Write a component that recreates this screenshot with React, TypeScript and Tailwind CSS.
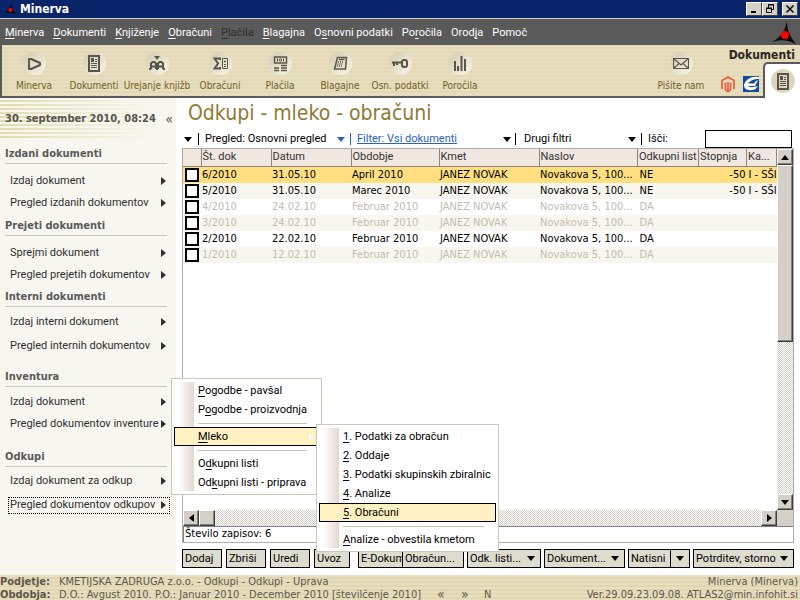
import * as React from 'react';
import clsx from 'clsx';

interface MenuEntry { label: string; disabled?: boolean }
interface Tool { label: string; width: string; icon: React.ReactNode }
interface Section { title: string; className: string; listClass: string; items: string[] }
interface Row { doc: string; date: string; period: string; list: string; rate?: string; group?: string; tone: string }

const MENU: MenuEntry[] = [
  { label: '&Minerva' }, { label: '&Dokumenti' }, { label: '&Knjiženje' }, { label: '&Obračuni' },
  { label: '&Plačila', disabled: true }, { label: '&Blagajna' }, { label: 'O&snovni podatki' },
  { label: 'Po&ročila' }, { label: 'Orod&ja' }, { label: 'Pomoč' },
];

const INK = '#5a554c';

const DocGlyph = () => (
  <svg width="12" height="17" viewBox="0 0 12 17" fill="none" stroke={INK}>
    <rect x="1" y="1" width="10" height="15" strokeWidth="2" />
    <path d="M3 4.500h3M3 6.500h3M7 4.500h2M7 6.500h2M3 8.500h6M3 10.500h6M3 12.500h6" />
    <path d="M3 3h3v4H3z" fill={INK} stroke="none" />
  </svg>
);

const TOOLS: Tool[] = [
  {
    label: 'Minerva', width: 'w-[60px]',
    icon: <svg width="16" height="14" viewBox="0 0 16 14" fill="none" stroke={INK} strokeWidth="2"><path d="M3 2v10h2l9-4V6L5 2z" strokeLinejoin="round" /></svg>,
  },
  { label: 'Dokumenti', width: 'w-[60px]', icon: <DocGlyph /> },
  {
    label: 'Urejanje knjižb', width: 'w-[66px]',
    icon: (
      <svg width="16" height="15" viewBox="0 0 16 15" fill="none" stroke={INK} strokeWidth="2">
        <path d="M5 0h6L8 4z" fill={INK} stroke="none" />
        <path d="M2 13V7.500L3.500 6h2L7 7.500V13M9 13V7.500L10.500 6h2L14 7.500V13M0 13h2M7 13h2M14 13h2M2 10.500h5M9 10.500h5" />
      </svg>
    ),
  },
  {
    label: 'Obračuni', width: 'w-[60px]',
    icon: (
      <svg width="15" height="13" viewBox="0 0 15 13" fill="none" stroke={INK}>
        <path d="M7 3V1.500H1.500L5 6.500 1.500 11.500H7V10" strokeWidth="2" />
        <path d="M9.500 1.500h5v10h-5zM11 4.500h2M12 3.500v2M11 7.500h2M11 9.500h2" />
      </svg>
    ),
  },
  {
    label: 'Plačila', width: 'w-[60px]',
    icon: (
      <svg width="15" height="16" viewBox="0 0 15 16" fill="none" stroke={INK}>
        <path d="M1.500 1h12v6h-12z" strokeWidth="1.500" />
        <path d="M4.500 2.500v3M10.500 2.500v3" /><circle cx="7.500" cy="4" r="1.200" />
        <path d="M1 12h5M1 14.500h5M8 9.500h6M8 12h6M8 14.500h6" strokeWidth="1.700" />
      </svg>
    ),
  },
  {
    label: 'Blagajne', width: 'w-[60px]',
    icon: (
      <svg width="15" height="15" viewBox="0 0 15 15" fill="none" stroke={INK}>
        <path d="M4.500 1.500h9l-1 11.500H1.500z" strokeWidth="1.500" />
        <path d="M6 3.500h5.500M5 6h1M7 6h1M9 6h1M4.500 8h1M6.500 8h1M8.500 8h1M4 10h1M6 10h1M8 10h1" strokeWidth="1.300" />
      </svg>
    ),
  },
  {
    label: 'Osn. podatki', width: 'w-[60px]',
    icon: (
      <svg width="16" height="9" viewBox="0 0 16 9" fill="none" stroke={INK} strokeWidth="2">
        <rect x="10" y="1" width="5" height="7" rx="2" /><path d="M0 3.500h10M2 4v3M5 4v2" />
      </svg>
    ),
  },
  {
    label: 'Poročila', width: 'w-[60px]',
    icon: <svg width="12" height="15" viewBox="0 0 12 15" stroke={INK} strokeWidth="2"><path d="M1 5v10M4 10v5M7.500 0v15M11 3v12" /></svg>,
  },
];

const SECTIONS: Section[] = [
  { title: 'Izdani dokumenti', className: 'pt-[6px]', listClass: 'pt-[6px]', items: ['Izdaj dokument', 'Pregled izdanih dokumentov'] },
  { title: 'Prejeti dokumenti', className: 'pt-1', listClass: 'pt-[6px]', items: ['Sprejmi dokument', 'Pregled prejetih dokumentov'] },
  { title: 'Interni dokumenti', className: 'pt-[3px]', listClass: 'pt-1 gap-[2px]', items: ['Izdaj interni dokument', 'Pregled internih dokumentov'] },
  { title: 'Inventura', className: 'pt-3', listClass: 'pt-1', items: ['Izdaj dokument', 'Pregled dokumentov inventure'] },
  { title: 'Odkupi', className: 'pt-[14px]', listClass: 'pt-[3px] gap-[2px]', items: ['Izdaj dokument za odkup', 'Pregled dokumentov odkupov'] },
];

const ROWS: Row[] = [
  { doc: '6/2010', date: '31.05.10', period: 'April 2010', list: 'NE', rate: '-50', group: 'I - SŠI', tone: 'bg-[#ffdf80] text-black' },
  { doc: '5/2010', date: '31.05.10', period: 'Marec 2010', list: 'NE', rate: '-50', group: 'I - SŠI', tone: 'bg-[#f7f7ef] text-black' },
  { doc: '4/2010', date: '24.02.10', period: 'Februar 2010', list: 'DA', tone: 'bg-white text-[#c2bcb2]' },
  { doc: '3/2010', date: '24.02.10', period: 'Februar 2010', list: 'DA', tone: 'bg-[#f7f7ef] text-[#c2bcb2]' },
  { doc: '2/2010', date: '22.02.10', period: 'Februar 2010', list: 'DA', tone: 'bg-white text-black' },
  { doc: '1/2010', date: '12.02.10', period: 'Februar 2010', list: 'DA', tone: 'bg-[#f7f7ef] text-[#c2bcb2]' },
];

const COLUMNS = ['', 'Št. dok', 'Datum', 'Obdobje', 'Kmet', 'Naslov', 'Odkupni list', 'Stopnja', 'Ka...'];

const ODKUPI_MENU = ['&Pogodbe - pavšal', 'P&ogodbe - proizvodnja', '-', '&Mleko', '-', 'O&dkupni listi', 'Od&kupni listi - priprava'];
const MLEKO_MENU = ['&1. Podatki za obračun', '&2. Oddaje', '&3. Podatki skupinskih zbiralnic', '&4. Analize', '&5. Obračuni', '-', '&Analize - obvestila kmetom'];

const WIDE = "font-['DejaVu_Sans_Condensed','DejaVu_Sans',sans-serif]";

// "&" marks the letter that is underlined
function Mnemonic({ text }: { text: string }) {
  const i = text.indexOf('&');
  if (i < 0) return <>{text}</>;
  return <>{text.slice(0, i)}<span className="underline underline-offset-2">{text[i + 1]}</span>{text.slice(i + 2)}</>;
}

function Caret({ className }: { className?: string }) {
  return <svg width="8" height="5" viewBox="0 0 8 5" className={clsx('shrink-0', className)} fill="currentColor"><path d="M0 0h8L4 5z" /></svg>;
}

function RightArrow() {
  return <svg width="5" height="8" viewBox="0 0 5 8" className="shrink-0" fill="currentColor"><path d="M0 0v8l5-4z" /></svg>;
}

function Disc({ children }: { children: React.ReactNode }) {
  return (
    <span className="size-[23px] flex items-center justify-center rounded-full bg-linear-to-br from-[#d3cab0] to-[#faf5e6]">{children}</span>
  );
}

function ToolButton({ label, width, icon }: Tool) {
  return (
    <button className={clsx('flex flex-col items-center gap-1 pt-[7px] whitespace-nowrap text-[10px] leading-[14px] text-[#6f6128]', width)}>
      <Disc>{icon}</Disc>
      <span>{label}</span>
    </button>
  );
}

function WindowButton({ label, children }: { label: string; children: React.ReactNode }) {
  return (
    <button aria-label={label} className="w-4 h-[14px] flex items-center justify-center bg-[#d4d0c8] border border-t-white border-l-white border-r-[#404040] border-b-[#404040]">
      <svg width="10" height="10" viewBox="0 0 10 10" fill="none" stroke="#000">{children}</svg>
    </button>
  );
}

function Star({ size }: { size: number }) {
  return (
    <svg width={size} height={size} viewBox="0 0 24 24" className="shrink-0">
      <path d="M15 0c0 9 3 16 9 23-8-4-15-5-24-2C8 17 13 10 15 0z" fill="#0b0b0b" />
      <circle cx="13" cy="14" r="4" fill="#f00" />
    </svg>
  );
}

function ScrollButton({ label, children, className }: { label: string; children?: React.ReactNode; className?: string }) {
  return (
    <button aria-label={label} className={clsx('shrink-0 flex items-center justify-center bg-[#d4d0c8] border border-t-white border-l-white border-r-[#404040] border-b-[#404040] shadow-[inset_-1px_-1px_0_#808080]', className)}>
      {children}
    </button>
  );
}

function PopupMenu({ items, active, className, submenu }: { items: string[]; active: string; className: string; submenu?: boolean }) {
  return (
    <div role="menu" className={clsx('absolute z-10 p-[2px] bg-white border border-[#c9c9b8] text-black', className)}>
      <div className="absolute top-[3px] bottom-[3px] left-[6px] w-4 bg-linear-to-r from-white to-[#e3d8d0]" />
      <div className="relative flex flex-col">
        {items.map((item, i) => item === '-' ? (
          <div key={i} className="h-2 flex items-center pl-6 pr-3"><div className="flex-1 border-t border-[#c4c4b4]" /></div>
        ) : (
          <button key={i} role="menuitem" className={clsx('h-[19px] flex items-center justify-between pl-[23px] pr-1 border text-left whitespace-nowrap', item === active ? 'bg-[#fff1c1] border-black' : 'border-transparent')}>
            <span><Mnemonic text={item} /></span>
            {submenu && item === active && <span className="text-white"><RightArrow /></span>}
          </button>
        ))}
      </div>
    </div>
  );
}

function ActionButton({ label, className, caret }: { label: string; className: string; caret?: boolean }) {
  return (
    <button className={clsx('h-[19px] shrink-0 flex items-center justify-between pl-[2px] bg-[#dedccf] border border-black overflow-hidden whitespace-nowrap', className)}>
      <span>{label}</span>
      {caret && <Caret className="mr-[5px]" />}
    </button>
  );
}

function Header() {
  return (
    <header>
      <div className="h-[18px] flex items-center gap-1 pl-1 pr-[2px] bg-[#0a246a] text-white">
        <Star size={12} />
        <h1 className={clsx('flex-1 text-[12px] font-bold', WIDE)}>Minerva</h1>
        <div className="flex">
          <WindowButton label="Minimize"><path d="M2 8h5" strokeWidth="2" /></WindowButton>
          <WindowButton label="Restore"><path d="M3.500 4V.500h5v5H7M3 1h6M1.500 4.500h5v4h-5zM1 4h6" /></WindowButton>
        </div>
        <WindowButton label="Close"><path d="M1.500 1.500l7 7M8.500 1.500l-7 7" strokeWidth="1.500" /></WindowButton>
      </div>
      <nav className="h-[27px] flex items-center gap-[9px] pt-[2px] pl-[5px] pr-1 border-t border-[#d4d0c8] bg-[#5a5a5a] text-white whitespace-nowrap">
        {MENU.map(({ label, disabled }) => (
          <button key={label} disabled={disabled} className={disabled ? 'text-[#2e2e2e]' : ''}><Mnemonic text={label} /></button>
        ))}
        <div className="flex-1" />
        <Star size={24} />
      </nav>
      <div className={clsx('h-[53px] flex border-l-2 border-b-2 border-[#5a5a5a] bg-[repeating-linear-gradient(#e7dfbf_0_2px,#e3d9b6_2px_4px)]', WIDE)}>
        <div className="flex pl-[2px]">{TOOLS.map((tool) => <ToolButton key={tool.label} {...tool} />)}</div>
        <div className="flex-1" />
        <ToolButton
          label="Pišite nam"
          width="w-[70px]"
          icon={<svg width="16" height="11" viewBox="0 0 16 11" fill="none" stroke={INK}><path d="M.500.500h15v10H.500zM.500.500L8 7l7.500-6.500M.500 10.500L6 5.500M15.500 10.500L10 5.500" strokeWidth="1.200" /></svg>}
        />
        <div className="w-[84px] flex flex-col">
          <div className="h-[17px] pr-[5px] pt-[2px] text-right text-[12px] leading-4 font-bold text-[#2b2720]">Dokumenti</div>
          <div className="flex items-end">
            <div className="flex-1 flex gap-2 pl-[5px] pb-[3px]">
              <svg width="14" height="17" viewBox="0 0 14 17" fill="none" stroke="#ee5a3c" strokeWidth="2">
                <path d="M1 13V4.500L7 1l6 3.500V13M4.500 14V6.500M9.500 14V6.500M4.500 14L7 15.500 9.500 14M7 6v9" strokeWidth="1.700" />
              </svg>
              <svg width="16" height="16" viewBox="0 0 16 16">
                <path d="M0 0h16v16H0z" fill="#164a9c" />
                <path d="M1 9C3 3 8 0 16 1v2C10 3 7 5 5 7.500h6L13 5l2-1-3 6H5c1 1.500 5 1.500 10 0l-3 3.500C6 15 1 14 1 9z" fill="#fff" />
              </svg>
            </div>
            <button aria-label="Dokumenti" className="w-[37px] h-9 -mb-[2px] flex items-center justify-center rounded-tl-[5px] border-t-2 border-l-2 border-[#5a5a5a] bg-white">
              <span className="size-6 flex items-center justify-center rounded-full bg-[#ddd6bf]"><DocGlyph /></span>
            </button>
          </div>
        </div>
      </div>
    </header>
  );
}

function Sidebar() {
  return (
    <aside className="w-[176px] shrink-0 bg-[#f7f7ef] text-[#2f2f2f]">
      <div className={clsx('h-[42px] flex items-center justify-between pl-[5px] pr-[3px] bg-[linear-gradient(90deg,transparent,#f7f7ef_85%),repeating-linear-gradient(#f7f7ef_0_2px,#e0dcae_2px_4px)] font-bold text-[#55554a] whitespace-nowrap', WIDE)}>
        <span>30. september 2010, 08:24</span>
        <button aria-label="Skrij" className="text-[14px] font-normal">«</button>
      </div>
      {SECTIONS.map(({ title, className, listClass, items }) => (
        <section key={title} className={className}>
          <h2 className={clsx('h-[18px] ml-[5px] mr-[9px] border-b border-[#c6c6c0] text-[11px] leading-4 font-bold text-[#5a5a5a]', WIDE)}>{title}</h2>
          <ul className={clsx('flex flex-col', listClass)}>
            {items.map((item) => (
              <li key={item} className="h-[22px] flex items-center pl-2 pr-[6px]">
                <button className={clsx('flex-1 h-[17px] flex items-center justify-between pl-px pr-[3px] border whitespace-nowrap', item === 'Pregled dokumentov odkupov' ? 'border-dotted border-black' : 'border-transparent')}>
                  {item}<RightArrow />
                </button>
              </li>
            ))}
          </ul>
        </section>
      ))}
    </aside>
  );
}

function FilterBar() {
  return (
    <div className="h-5 flex items-center pt-[2px] pl-[2px] whitespace-nowrap">
      <button aria-label="Meni"><Caret /></button>
      <div className="h-3 ml-[6px] mr-[6px] border-l border-black" />
      <button className="w-[140px] flex items-center justify-between">Pregled: Osnovni pregled <Caret className="text-[#2a62c4]" /></button>
      <div className="h-3 ml-[5px] mr-[6px] border-l border-[#2a62c4]" />
      <div className="w-[154px] flex items-center justify-between">
        <a href="#filter" className="text-[#2a62c4] underline">Filter: Vsi dokumenti</a>
        <button aria-label="Filter"><Caret /></button>
      </div>
      <div className="h-3 ml-1 mr-2 border-l border-black" />
      <button className="w-[112px] flex items-center justify-between">Drugi filtri <Caret /></button>
      <div className="h-3 ml-[5px] mr-[6px] border-l border-black" />
      <label htmlFor="search">Išči:</label>
      <div className="flex-1" />
      <input id="search" type="text" className="w-[87px] h-[18px] mr-[2px] px-1 border border-black bg-white" />
    </div>
  );
}

function Grid() {
  const track = 'bg-[repeating-conic-gradient(#d4d0c8_0_25%,#fff_0_50%)] bg-[length:2px_2px]';
  return (
    <div className="flex-1 min-h-0 flex flex-col border border-[#b5aca6]">
      <div className="flex-1 min-h-0 flex">
        <div className="flex-1 min-w-0 overflow-hidden">
          <table className="w-full table-fixed border-collapse whitespace-nowrap text-[11px]">
            <colgroup>
              <col className="w-[18px]" /><col className="w-[70px]" /><col className="w-[80px]" /><col className="w-[88px]" /><col className="w-[100px]" />
              <col /><col className="w-[61px]" /><col className="w-[48px]" /><col className="w-[30px]" />
            </colgroup>
            <thead>
              <tr className="h-[17px] bg-[#efe7e0] text-[#333]">
                {COLUMNS.map((name) => (
                  <th key={name} className="p-0 pl-px text-left font-normal leading-4 border-r border-b border-[#8d8680] overflow-hidden">{name}</th>
                ))}
              </tr>
            </thead>
            <tbody className={WIDE}>
              {ROWS.map(({ doc, date, period, list, rate, group, tone }) => (
                <tr key={doc} className={clsx('h-4 leading-4', tone)}>
                  <td className="p-0 pl-[2px]"><input type="checkbox" aria-label={doc} className="block size-[14px] appearance-none border-2 border-black bg-white" /></td>
                  <td className="p-0 pl-px">{doc}</td>
                  <td className="p-0 pl-px">{date}</td>
                  <td className="p-0 pl-px">{period}</td>
                  <td className="p-0 pl-px">JANEZ NOVAK</td>
                  <td className="p-0 pl-px overflow-hidden">Novakova 5, 100...</td>
                  <td className="p-0 pl-[2px]">{list}</td>
                  <td className="p-0 pr-px text-right">{rate}</td>
                  <td className="p-0 pl-[2px] overflow-hidden">{group}</td>
                </tr>
              ))}
            </tbody>
          </table>
        </div>
        <div className={clsx('w-4 flex flex-col', track)}>
          <ScrollButton label="Gor" className="h-4"><Caret className="rotate-180" /></ScrollButton>
          <ScrollButton label="Drsnik" className="h-[49%]" />
          <div className="flex-1" />
          <ScrollButton label="Dol" className="h-4"><Caret /></ScrollButton>
        </div>
      </div>
      <div className="flex h-4">
        <div className={clsx('flex-1 flex', track)}>
          <ScrollButton label="Levo" className="w-4"><span className="rotate-180"><RightArrow /></span></ScrollButton>
          <ScrollButton label="Drsnik" className="w-4" />
          <div className="flex-1" />
          <ScrollButton label="Desno" className="w-4"><RightArrow /></ScrollButton>
        </div>
        <div className="w-4 bg-[#d4d0c8]" />
      </div>
      <div className={clsx('h-4 pl-px border-t border-l border-[#808080] leading-[14px]', WIDE)}>Število zapisov: 6</div>
    </div>
  );
}

function Actions() {
  return (
    <div className="flex pt-[6px] pb-[7px]">
      <ActionButton label="Dodaj" className="w-10 mr-1" />
      <ActionButton label="Zbriši" className="w-10 mr-1" />
      <ActionButton label="Uredi" className="w-10 mr-1" />
      <ActionButton label="Uvoz" className="w-9 mr-2" />
      <ActionButton label="E-Dokum" className="w-[45px] -mr-px" />
      <ActionButton label="Obračun..." className="w-[62px] mr-[3px]" />
      <ActionButton label="Odk. listi..." className="w-[74px] mr-[3px]" caret />
      <ActionButton label="Dokument..." className="w-[81px] mr-[3px]" caret />
      <ActionButton label="Natisni" className="w-[43px]" />
      <button aria-label="Natisni, več" className="w-[19px] h-[19px] mr-[3px] flex items-center justify-center border border-l-0 border-black bg-[#dedccf]"><Caret /></button>
      <ActionButton label="Potrditev, storno" className="w-[101px]" caret />
    </div>
  );
}

export default function App() {
  return (
    <div className="relative h-screen flex flex-col overflow-hidden bg-white text-[11px] leading-4 text-black font-[Roboto,'DejaVu_Sans_Condensed',sans-serif]">
      <Header />
      <div className="flex-1 min-h-0 flex">
        <Sidebar />
        <main className="flex-1 min-w-0 flex flex-col pl-[6px] pr-[6px]">
          <h2 className={clsx('h-[30px] pl-[6px] text-[21px] leading-[31px] text-[#8f7a36]', WIDE)}>Odkupi - mleko - obračuni</h2>
          <FilterBar />
          <Grid />
          <Actions />
        </main>
      </div>
      <footer className={clsx('h-[25px] shrink-0 flex justify-between bg-[repeating-linear-gradient(#e7dfbf_0_2px,#e2d6b0_2px_4px)] leading-[13px] text-[#5d574b] whitespace-nowrap', WIDE)}>
        <dl className="grid grid-cols-[59px_auto] content-start">
          <dt className="font-bold">Podjetje:</dt><dd>KMETIJSKA ZADRUGA z.o.o. - Odkupi - Odkupi - Uprava</dd>
          <dt className="font-bold">Obdobja:</dt>
          <dd className="flex">
            <span className="w-[378px]">D.O.: Avgust 2010. P.O.: Januar 2010 - December 2010 [številčenje 2010]</span>
            <button className="w-6 text-left text-[14px]">«</button>
            <button className="w-[23px] text-left text-[14px]">»</button>
            <span>N</span>
          </dd>
        </dl>
        <div className="text-right pr-[2px]">
          <div>Minerva (Minerva)</div>
          <div>Ver.29.09.23.09.08. ATLAS2@min.infohit.si</div>
        </div>
      </footer>
      <PopupMenu items={ODKUPI_MENU} active="&Mleko" submenu className="left-[171px] top-[378px] w-[151px]" />
      <PopupMenu items={MLEKO_MENU} active="&5. Obračuni" className="left-[316px] top-[424px] w-[183px]" />
    </div>
  );
}
